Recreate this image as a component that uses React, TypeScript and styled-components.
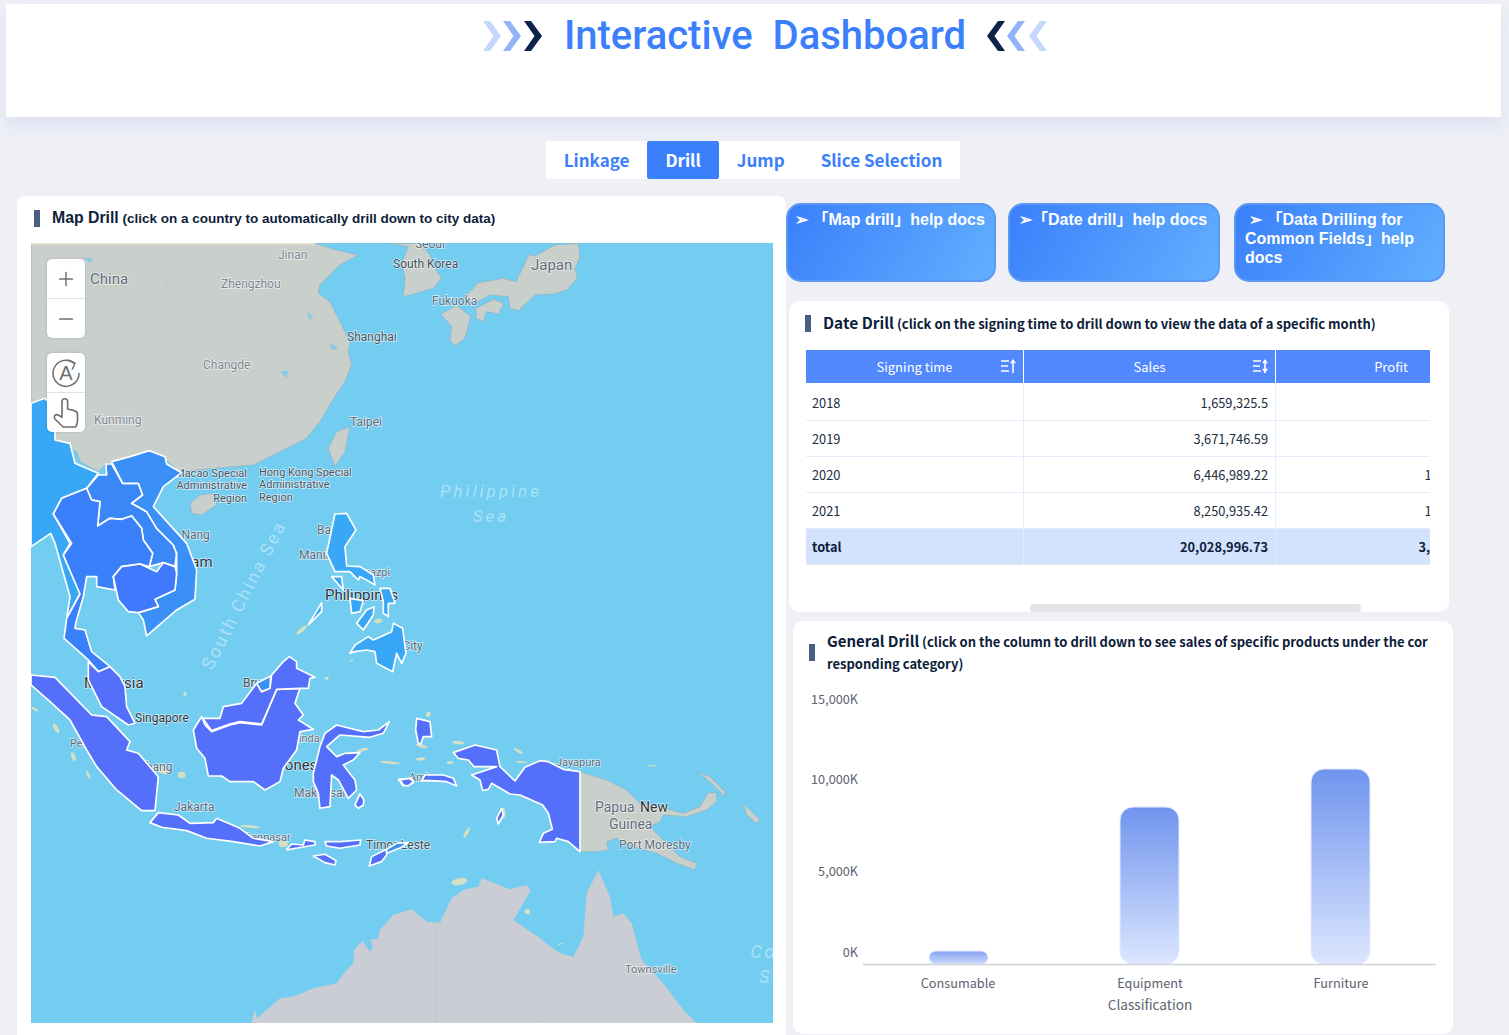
import React from 'react';
import styled, { createGlobalStyle } from 'styled-components';
import { Plus, Minus } from 'lucide-react';

const UI_FONT = '"Noto Sans CJK SC", "Noto Sans", sans-serif';
const ARIAL = '"Liberation Sans", "Noto Sans CJK SC", sans-serif';

const GlobalStyle = createGlobalStyle`
  html, body {
    margin: 0;
    padding: 0;
    background: #eff0f6;
    font-family: ${UI_FONT};
  }
  #root {
    height: 1035px;
    overflow: hidden;
  }
`;

const Header = styled.header`
  height: 113px;
  margin: 4px 8px 0 6px;
  padding: 14px 0 0 23px;
  background: #fff;
  box-shadow: 0 9px 16px rgba(195, 204, 235, 0.42);
  display: flex;
  justify-content: center;
  align-items: flex-start;
  box-sizing: border-box;
  gap: 21px;
`;

const Title = styled.h1`
  margin: 0;
  font-family: Roboto, sans-serif;
  font-size: 40px;
  line-height: 36px;
  font-weight: 500;
  color: #3b7ffb;
  white-space: pre;
`;

const Chevrons = styled.svg`
  width: 60px;
  height: 32px;
  margin-top: 2px;
  flex: none;
`;

const TabRow = styled.nav`
  display: flex;
  justify-content: center;
  margin-top: 24px;
  padding-right: 3px;
`;

const TabList = styled.div`
  display: flex;
  background: #fff;
  border-radius: 2px;
`;

const Tab = styled.div<{ $active?: boolean }>`
  height: 38px;
  line-height: 38px;
  padding: 0 18px;
  font-size: 17px;
  font-weight: 700;
  border-radius: 2px;
  color: ${p => (p.$active ? '#fff' : '#3b7ffb')};
  background: ${p => (p.$active ? '#3b7ffb' : 'transparent')};
`;

const Main = styled.main`
  display: flex;
  align-items: flex-start;
  margin-top: 17px;
  padding-left: 17px;
`;

const MapCard = styled.section`
  width: 769px;
  height: 840px;
  background: #fff;
  border-radius: 8px 8px 0 0;
  padding: 0 0 0 14px;
  box-sizing: border-box;
  flex: none;
`;

const CardTitle = styled.div<{ $arial?: boolean }>`
  display: flex;
  align-items: center;
  gap: 12px;
  font-family: ${p => (p.$arial ? ARIAL : UI_FONT)};
  color: #0d1d3a;
  font-weight: 700;
`;

const TitleBar = styled.i`
  display: block;
  flex: none;
  width: 6px;
  height: 17px;
  background: #4b5d84;
`;

const TitleText = styled.div<{ $size: number; $wrap?: boolean }>`
  font-size: ${p => p.$size}px;
  line-height: 22px;
  ${p => (p.$wrap ? 'word-break: break-all;' : 'white-space: nowrap;')}
`;

const TitleLead = styled.span<{ $size: number }>`
  font-size: ${p => p.$size}px;
`;

const MapHead = styled(CardTitle)`
  height: 47px;
  padding-left: 3px;
  padding-bottom: 3px;
  box-sizing: border-box;
`;

const MapFrame = styled.div`
  position: relative;
  width: 742px;
  height: 780px;
  overflow: hidden;
  background: #72cdf1;
`;

const MapSvg = styled.svg`
  display: block;
  width: 742px;
  height: 780px;
`;

const MapControls = styled.div`
  position: absolute;
  left: 16px;
  top: 16px;
  display: flex;
  flex-direction: column;
  gap: 15px;
`;

const ControlGroup = styled.div`
  width: 38px;
  background: #fff;
  border-radius: 5px;
  box-shadow: 0 0 3px rgba(0, 0, 0, 0.15);
  overflow: hidden;
`;

const ControlButton = styled.div`
  height: 39px;
  display: flex;
  align-items: center;
  justify-content: center;
  color: #6f6f6f;
  & + & {
    border-top: 1px solid #dfe1e3;
  }
`;

const RightColumn = styled.div`
  flex: none;
  width: 670px;
  padding-top: 7px;
`;

const DocRow = styled.div`
  display: flex;
`;

const DocButton = styled.div<{ $width: number; $gap: number; $indent: number }>`
  width: ${p => p.$width}px;
  height: 79px;
  margin-left: ${p => p.$gap}px;
  box-sizing: border-box;
  padding: 5px 0 0 9px;
  border: 2px solid #5b98f3;
  border-radius: 15px;
  background: linear-gradient(120deg, #3a7ffb 0%, #62b0ff 100%);
  color: #fff;
  font-family: ${ARIAL};
  font-weight: 700;
  font-size: 16px;
  line-height: 19px;
  text-indent: ${p => p.$indent}px;
`;

const Card = styled.section<{ $top: number; $left: number; $height: number }>`
  position: relative;
  width: 660px;
  height: ${p => p.$height}px;
  margin-top: ${p => p.$top}px;
  margin-left: ${p => p.$left}px;
  background: #fff;
  border-radius: 10px;
  box-sizing: border-box;
`;

const DateHead = styled(CardTitle)`
  padding: 10px 0 0 16px;
`;

const GeneralHead = styled(CardTitle)`
  padding: 9px 20px 0 16px;
`;

const TableWrap = styled.div`
  width: 624px;
  margin: 15px 0 0 17px;
  overflow: hidden;
`;

const Table = styled.table`
  width: 701px;
  table-layout: fixed;
  border-collapse: separate;
  border-spacing: 0;
  font-size: 12.8px;
  color: #222c40;
`;

const Th = styled.th`
  position: relative;
  height: 35px;
  padding: 0;
  font-weight: 400;
  font-size: 13px;
  color: #fff;
  background: #5288fe;
  border-right: 1px solid #fff;
  border-bottom: 2px solid #fff;
  box-sizing: border-box;
`;

const Td = styled.td<{ $num?: boolean; $total?: boolean }>`
  height: 36px;
  padding: ${p => (p.$num ? '0 7px 0 0' : '0 0 0 6px')};
  box-sizing: border-box;
  text-align: ${p => (p.$num ? 'right' : 'left')};
  font-weight: ${p => (p.$total ? 700 : 400)};
  color: ${p => (p.$total ? '#0d1d3a' : '#222c40')};
  background: ${p => (p.$total ? '#d3e2fd' : '#fff')};
  border-right: 1px solid #e3ecfb;
  border-bottom: 1px solid #e3ecfb;
`;

const SortGlyph = styled.svg`
  position: absolute;
  right: 6px;
  top: 8px;
  width: 17px;
  height: 16px;
`;

const ScrollThumb = styled.div`
  position: absolute;
  left: 241px;
  bottom: 0;
  width: 331px;
  height: 8px;
  border-radius: 4px;
  background: #e3e4e8;
`;

const ChartSvg = styled.svg`
  display: block;
  width: 660px;
  height: 345px;
  margin-top: 14px;
`;

const chevronPoints = (x: number, flip: boolean) => {
  const p = flip
    ? [[11, 0], [18, 0], [7.5, 15], [18, 30], [11, 30], [0, 15]]
    : [[0, 0], [7, 0], [18, 15], [7, 30], [0, 30], [10.5, 15]];
  return p.map(([a, b]) => `${a + x},${b + 1}`).join(' ');
};

const LeftChevrons = () => (
  <Chevrons viewBox="0 0 60 32">
    <polygon points={chevronPoints(0, false)} fill="#c6d7fe" />
    <polygon points={chevronPoints(20, false)} fill="#92b5fa" />
    <polygon points={chevronPoints(41, false)} fill="#0d2347" />
  </Chevrons>
);

const RightChevrons = () => (
  <Chevrons viewBox="0 0 60 32">
    <polygon points={chevronPoints(0, true)} fill="#0d2347" />
    <polygon points={chevronPoints(20, true)} fill="#92b5fa" />
    <polygon points={chevronPoints(42, true)} fill="#c6d7fe" />
  </Chevrons>
);

const SortIcon = ({ both }: { both?: boolean }) => (
  <SortGlyph viewBox="0 0 17 16" fill="none" stroke="#fff" strokeWidth="1.6">
    <path d="M1 3h8M1 8h7M1 13h8" />
    <path d="M13 15V2" />
    <path d="M10.5 5L13 1.5 15.5 5z" fill="#fff" strokeWidth="0.6" />
    {both && <path d="M10.5 11L13 14.5 15.5 11z" fill="#fff" strokeWidth="0.6" />}
  </SortGlyph>
);

const RotateA = () => (
  <svg width="30" height="30" viewBox="0 0 30 30" fill="none" stroke="#6f6f6f" strokeWidth="1.5">
    <path d="M23.5 5.5A13 13 0 1 0 28 15" />
    <path d="M17 2l7 3.2-2.8 6.3" />
    <text x="15" y="22" textAnchor="middle" fontFamily="Liberation Sans" fontSize="20" fill="#6f6f6f" stroke="none">A</text>
  </svg>
);

const HandPointer = () => (
  <svg width="28" height="32" viewBox="0 0 28 32" fill="none" stroke="#6f6f6f" strokeWidth="1.6" strokeLinejoin="round" strokeLinecap="round">
    <path d="M10 20V4.5a2.8 2.8 0 0 1 5.6 0V12l6.6 1.6c2 .5 3.3 2 3.3 4V24c0 2-.7 3.6-1.8 6H11L3 22c-1.6-1.7-.5-4.4 1.8-4.4 1.3 0 2.6.8 5.2 2.9" />
  </svg>
);

/* land, in the coordinates of the zoomed crops */
const LAND_A = [
  '33,145 885,145 950,165 1015,180 960,210 900,270 895,295 930,320 965,390 990,440 985,470 995,510 975,560 935,620 900,680 860,730 800,760 740,790 700,810 640,815 480,830 430,790 385,770 330,795 260,805 235,830 180,800 170,770 110,740 33,620',
  '510,925 540,900 580,895 590,930 545,960 515,955',
  '1105,148 1165,155 1145,205 1155,250 1150,305 1190,295 1240,280 1265,250 1245,220 1230,180 1200,145',
  '925,760 950,710 990,695 975,770 945,815',
];

const LAND_J = [
  '75,170 115,128 190,115 228,125 268,42 285,48 345,15 415,10 420,50 405,85 412,115 380,150 340,162 285,165 235,212 210,205 205,170 150,165 105,190',
  '108,205 160,178 192,190 175,222 140,215 130,245 108,235',
  '2,222 50,195 92,230 75,295 45,318 30,300 35,260',
];

const LAND_P = [
  '540,365 620,390 680,420 720,460 780,470 850,490 900,470 925,428 950,428 950,455 920,480 860,500 790,495 780,515 750,530 790,570 840,620 890,640 885,660 830,640 770,610 700,590 650,565 620,575 625,600 590,605 540,605',
  '890,365 930,380 975,425 975,440 930,395',
  '1030,460 1080,510 1070,520 1040,495',
];

const AUS_EAST = '420,866 480,910 520,920 550,860 560,730 595,660 630,740 640,800 670,790 695,820 725,930 790,1000 850,1080 890,1120 420,1120';
const AUS_WEST = '213,522 225,480 232,505 300,445 345,438 400,415 470,400 495,365 520,340 522,300 548,272 570,305 578,295 572,268 593,268 600,240 640,195 695,178 740,215 780,218 815,145 855,118 895,110 905,85 990,118 1040,105 1052,122 1000,210 1085,268 1085,522';

const BORDERS = [
  '440,290 480,310 520,330 545,310 570,300 610,325 640,340 670,325 700,320 745,295 790,300 825,330 860,350',
  '330,480 365,470 400,490 390,530 420,545 450,560 490,530 530,510 565,520 600,540 645,570 690,590 700,640 665,670 640,700 670,750 700,800',
  '530,510 535,565 540,620 580,640 620,660 610,710 600,760',
  '230,320 265,345 300,370 320,405 340,440 310,480 280,520 275,560 270,600 250,640 230,680 220,720',
  '380,200 410,235 440,260 430,290 455,315 480,340 460,370 440,400 470,425 500,450',
  '760,340 790,320 820,300 835,330 850,360 875,370 900,380 920,415 940,450',
  '690,590 735,575 780,560 805,545 830,530 855,525 880,520 920,540 960,560',
  '440,170 410,215 445,250 430,290',
  '560,160 590,210 600,265 570,300',
];

const ISLANDS = [
  [45, 808, 12, 4, 30], [108, 865, 6, 16, -30], [160, 950, 6, 14, -20], [205, 1005, 4, 14, -25],
  [485, 1005, 12, 10, 0], [430, 990, 18, 12, 20], [495, 762, 5, 8, 0], [920, 715, 7, 4, -20],
  [1075, 543, 12, 7, -10], [1110, 968, 30, 4, 5], [1200, 958, 14, 4, 0], [1028, 930, 18, 5, -15],
  [1225, 825, 8, 5, -30], [1205, 918, 18, 5, 15], [790, 1212, 14, 10, 0], [690, 1160, 30, 4, 5],
  [845, 570, 20, 6, -40], [995, 662, 5, 3, 0],
];

const ISLANDS_P = [
  [175, 278, 18, 5, 5], [355, 303, 16, 4, 30], [365, 336, 18, 3, 5], [150, 338, 10, 4, 0],
  [757, 347, 14, 2, 0], [178, 695, 24, 10, -10], [382, 785, 8, 8, 0], [200, 548, 5, 18, 30],
  [85, 190, 7, 5, -30], [310, 490, 6, 16, 0], [482, 882, 8, 2, -20], [65, 326, 10, 4, 0],
];

const TEXT_LABELS: { t: string; x: number; y: number; s: number; c: string; a?: 'start' | 'end' }[] = [
  { t: 'China', x: 90, y: 284, s: 15, c: '#5f6a7a' },
  { t: 'Jinan', x: 278, y: 259, s: 12, c: '#7c8491' },
  { t: 'Zhengzhou', x: 221, y: 288, s: 12, c: '#7c8491' },
  { t: 'Changde', x: 203, y: 369, s: 12, c: '#7c8491' },
  { t: 'Kunming', x: 94, y: 424, s: 12, c: '#7c8491' },
  { t: 'Seoul', x: 415, y: 248, s: 12, c: '#5f6a7a' },
  { t: 'South Korea', x: 393, y: 268, s: 12, c: '#434b58' },
  { t: 'Japan', x: 531, y: 270, s: 15, c: '#5f6a7a' },
  { t: 'Fukuoka', x: 432, y: 305, s: 12, c: '#6a7280' },
  { t: 'Shanghai', x: 347, y: 341, s: 12, c: '#4a525e' },
  { t: 'Taipei', x: 350, y: 426, s: 12, c: '#5f6a7a' },
  { t: 'Macao Special', x: 247, y: 477, s: 11, c: '#4a525e', a: 'end' },
  { t: 'Administrative', x: 247, y: 489, s: 11, c: '#4a525e', a: 'end' },
  { t: 'Region', x: 247, y: 502, s: 11, c: '#4a525e', a: 'end' },
  { t: 'Hong Kong Special', x: 259, y: 476, s: 11, c: '#4a525e' },
  { t: 'Administrative', x: 259, y: 488, s: 11, c: '#4a525e' },
  { t: 'Region', x: 259, y: 501, s: 11, c: '#4a525e' },
  { t: 'Da Nang', x: 164, y: 539, s: 12, c: '#5f6a7a' },
  { t: 'Vietnam', x: 157, y: 567, s: 15, c: '#2d333d' },
  { t: 'Baguio', x: 317, y: 534, s: 12, c: '#5f6a7a' },
  { t: 'Manila', x: 299, y: 559, s: 12, c: '#5f6a7a' },
  { t: 'Legazpi', x: 352, y: 576, s: 11, c: '#5f6a7a' },
  { t: 'Philippines', x: 325, y: 600, s: 15, c: '#2d333d' },
  { t: 'Davao City', x: 366, y: 650, s: 12, c: '#5f6a7a' },
  { t: 'Malaysia', x: 84, y: 688, s: 15, c: '#2d333d' },
  { t: 'Brunei', x: 243, y: 687, s: 12, c: '#434b58' },
  { t: 'Singapore', x: 135, y: 722, s: 12, c: '#2d333d' },
  { t: 'Pekanbaru', x: 70, y: 747, s: 11, c: '#5f6a7a' },
  { t: 'Palembang', x: 112, y: 771, s: 12, c: '#5f6a7a' },
  { t: 'Samarinda', x: 267, y: 742, s: 11, c: '#6a7280' },
  { t: 'Indonesia', x: 264, y: 770, s: 15, c: '#2d333d' },
  { t: 'Makassar', x: 294, y: 797, s: 12, c: '#5f6a7a' },
  { t: 'Jakarta', x: 174, y: 811, s: 12, c: '#5f6a7a' },
  { t: 'Denpasar', x: 244, y: 841, s: 11, c: '#5f6a7a' },
  { t: 'Timor-Leste', x: 366, y: 849, s: 12, c: '#434b58' },
  { t: 'Ambon', x: 409, y: 781, s: 11, c: '#5f6a7a' },
  { t: 'Jayapura', x: 556, y: 766, s: 11, c: '#5f6a7a' },
  { t: 'Papua', x: 595, y: 812, s: 14, c: '#5f6a7a' },
  { t: 'New', x: 640, y: 812, s: 14, c: '#2d333d' },
  { t: 'Guinea', x: 609, y: 829, s: 14, c: '#5f6a7a' },
  { t: 'Port Moresby', x: 619, y: 849, s: 12, c: '#5f6a7a' },
  { t: 'Townsville', x: 625, y: 973, s: 11, c: '#6a7280' },
];

const SEA_LABELS = [
  { t: 'Philippine', x: 491, y: 497, s: 17 },
  { t: 'Sea', x: 491, y: 522, s: 17 },
  { t: 'Coral', x: 778, y: 958, s: 18 },
  { t: 'Sea', x: 778, y: 983, s: 18 },
];

/* drill regions */
const REGIONS_A: [string, string][] = [
  ['#38a7f5', '33,-110 75,-125 105,-95 105,0 150,10 165,70 235,100 200,145 125,175 100,222 150,310 130,345 180,460 140,535 150,470 105,310 92,280 33,320'],
  ['#3a88f8', '258,72 260,105 235,105 200,145 215,180 240,185 233,258 270,235 305,238 335,228 365,265 370,300 398,340 388,380 430,368 465,380 470,340 460,315 410,265 380,215 335,190 368,165 355,130 308,130 275,72'],
  ['#3a90f7', '275,65 330,50 388,32 435,50 440,72 485,98 430,140 400,200 500,310 530,390 525,478 470,510 380,588 370,540 355,518 415,500 405,478 465,450 470,400 470,340 460,315 410,265 380,215 335,190 368,165 355,130 308,130'],
  ['#3a80fa', '200,145 125,175 100,222 155,310 130,345 180,462 140,535 132,595 205,660 235,695 270,680 240,655 215,635 195,570 165,565 167,550 190,470 200,410 230,410 230,440 285,450 280,410 305,380 360,372 388,380 398,340 370,300 365,265 335,228 305,238 270,235 233,258 240,185 215,180'],
  ['#4079fb', '305,380 360,372 410,395 430,368 465,380 470,400 465,450 405,478 415,500 355,518 325,515 295,480 280,410'],
  ['#5470fb', '205,665 235,695 270,680 300,710 315,740 320,800 345,850 325,855 245,800 205,720'],
  ['#5470fb', '33,705 105,712 215,825 260,830 330,905 320,930 355,940 415,1010 405,1112 365,1112 290,1050 230,980 200,930 150,840 90,785 33,735'],
  ['#5470fb', '390,1148 415,1118 475,1125 510,1150 580,1148 590,1135 660,1165 700,1195 760,1205 720,1218 640,1205 560,1195 500,1172 425,1162'],
  ['#5470fb', '800,1228 815,1212 850,1215 855,1200 885,1205 885,1215 810,1228'],
  ['#5470fb', '915,1205 960,1205 1022,1200 1020,1215 960,1225 920,1218'],
  ['#5470fb', '880,1248 915,1243 948,1262 945,1275 915,1268'],
  ['#5470fb', '1048,1278 1055,1250 1100,1228 1100,1245 1085,1265'],
  ['#3a8ff7', '1100,1228 1130,1210 1165,1208 1145,1222 1100,1240'],
  ['#5470fb', '520,870 545,830 555,855 575,875 630,855 660,848 725,855 770,748 840,745 825,790 850,825 835,840 880,868 840,875 830,930 790,985 780,1025 735,1050 700,1025 630,1025 605,1008 565,1008 555,955 530,925'],
  ['#5470fb', '548,835 575,872 630,852 660,845 725,852 770,748 840,745 865,745 870,715 885,712 830,685 830,665 808,650 790,665 755,705 750,745 725,755 710,730 665,790 610,800 600,835'],
  ['#3a8ff7', '710,730 752,708 750,745 725,755'],
  ['#5470fb', '880,1000 890,960 900,920 915,880 950,855 1030,875 1075,870 1108,845 1090,880 1050,892 960,885 920,920 950,950 975,940 1020,938 1000,960 970,975 1005,1020 1010,1050 985,1075 955,1020 935,1005 930,1100 900,1105 895,1060 880,1025'],
  ['#5470fb', '1005,1095 1020,1062 1032,1080 1030,1095 1015,1105'],
  ['#5470fb', '1135,1018 1175,1015 1180,1030 1150,1038'],
  ['#38a7f5', '945,222 980,220 1008,270 975,320 980,378 1020,380 1060,405 1065,435 1040,420 1020,410 1015,420 990,395 945,395 920,340'],
  ['#38a7f5', '935,410 965,410 970,450'],
  ['#38a7f5', '865,555 905,488 905,515'],
  ['#38a7f5', '990,475 1030,482 1020,515 995,520'],
  ['#38a7f5', '1010,550 1040,510 1062,500 1060,525 1030,570'],
  ['#38a7f5', '1080,445 1110,445 1125,490 1105,490 1105,530 1090,520 1090,485'],
  ['#38a7f5', '990,640 1005,615 1045,590 1060,600 1115,575 1120,550 1148,565 1158,640 1145,670 1130,640 1118,695 1070,670 1065,635 1040,630 1005,635'],
];

const REGIONS_P = [
  '160,308 225,285 290,300 300,350 345,393 375,352 420,332 445,335 490,358 540,365 540,605 505,575 470,565 465,575 418,577 430,550 457,538 445,490 428,465 360,435 330,432 275,400 265,418 248,422 240,390 215,375 290,350 222,350 205,330 175,325',
  '290,505 305,475 310,495 295,522',
  '50,205 90,215 95,260 70,260 62,282 55,280 47,240',
  '65,392 75,375 130,375 160,385 170,408 140,395 90,392',
  '0,390 30,385 40,395 25,408 10,405',
];

const ASIA_TX = 'translate(20 195) scale(0.3333)';
const SEA_TX = 'translate(20 440) scale(0.3333)';
const PAPUA_TX = 'translate(400 650) scale(0.3333)';
const JAPAN_TX = 'translate(440 240) scale(0.3333)';
const AUS_TX = 'translate(180 850) scale(0.3333)';

const MapDrawing = () => (
  <MapSvg viewBox="31 243 742 780">
    <defs>
      <linearGradient id="landFill" gradientUnits="userSpaceOnUse" x1="0" y1="900" x2="0" y2="1023">
        <stop offset="0" stopColor="#c9cfca" />
        <stop offset="1" stopColor="#cacdd8" />
      </linearGradient>
    </defs>
    <rect x="31" y="243" width="742" height="780" fill="#72cdf1" />
    <g fill="#c9cfca" stroke="#8fb6c6" strokeWidth="2.4">
      <g transform={ASIA_TX}>
        {LAND_A.map(p => <polygon key={p} points={p} />)}
      </g>
      <g transform={JAPAN_TX}>
        {LAND_J.map(p => <polygon key={p} points={p} />)}
      </g>
      <g transform={PAPUA_TX}>
        {LAND_P.map(p => <polygon key={p} points={p} />)}
      </g>
    </g>
    <g stroke="none" fill="#cacdd3">
      <polygon transform={AUS_TX} points={AUS_WEST} />
      <polygon transform={PAPUA_TX} points={AUS_EAST} />
    </g>
    <rect x="31" y="243" width="284" height="1.5" fill="#e8e8c6" />
    <g stroke="#bdc4cf" strokeWidth="2" fill="none">
      <path transform={AUS_TX} d="M770 220V520" />
      <path transform={PAPUA_TX} d="M432 885V1118" />
    </g>
    <g transform={ASIA_TX} fill="none" stroke="#bec6cf" strokeWidth="2" strokeOpacity="0.8">
      {BORDERS.map(p => <polyline key={p} points={p} />)}
      <path d="M190 185l20 20 10-12zM780 530l20 20 5-24zM860 350l20 15-10 10zM930 445l25 15-20 5z" fill="#86c9e6" stroke="none" />
    </g>
    <g fill="#e6e2b8" fillOpacity="0.85">
      <g transform={SEA_TX}>
        {ISLANDS.map(([x, y, rx, ry, r]) => (
          <ellipse key={`${x}-${y}`} cx={x} cy={y} rx={rx} ry={ry} transform={`rotate(${r} ${x} ${y})`} />
        ))}
      </g>
      <g transform={PAPUA_TX}>
        {ISLANDS_P.map(([x, y, rx, ry, r]) => (
          <ellipse key={`${x}-${y}`} cx={x} cy={y} rx={rx} ry={ry} transform={`rotate(${r} ${x} ${y})`} />
        ))}
      </g>
    </g>
    <g fontFamily="Roboto, sans-serif" fontStyle="italic" fill="rgba(255,255,255,0.42)">
      {SEA_LABELS.map(l => (
        <text key={`${l.t}${l.x}${l.y}`} x={l.x} y={l.y} fontSize={l.s} textAnchor="middle" letterSpacing="3">{l.t}</text>
      ))}
      <text transform="translate(212 671) rotate(-63)" fontSize="18" letterSpacing="2.2" fontStyle="normal">South China Sea</text>
    </g>
    <g fontFamily="Roboto, sans-serif" stroke="rgba(255,255,255,0.7)" strokeWidth="1.4" style={{ paintOrder: 'stroke' }}>
      {TEXT_LABELS.map(l => (
        <text key={`${l.t}${l.x}`} x={l.x} y={l.y} fontSize={l.s} fill={l.c} textAnchor={l.a ?? 'start'}>{l.t}</text>
      ))}
    </g>
    <g stroke="#fff" strokeWidth="5" strokeLinejoin="round">
      <g transform={SEA_TX}>
        {REGIONS_A.map(([c, p]) => <polygon key={p} points={p} fill={c} />)}
      </g>
      <g transform={PAPUA_TX} fill="#5470fb">
        {REGIONS_P.map(p => <polygon key={p} points={p} />)}
      </g>
    </g>
  </MapSvg>
);

const ROWS = [
  ['2018', '1,659,325.5', '246,118.37'],
  ['2019', '3,671,746.59', '602,114.83'],
  ['2020', '6,446,989.22', '1,043,287.45'],
  ['2021', '8,250,935.42', '1,235,002.18'],
];

const AXIS = [
  { t: '15,000K', y: 705 },
  { t: '10,000K', y: 785 },
  { t: '5,000K', y: 877 },
  { t: '0K', y: 958 },
];

const BARS = [
  { x: 929, y: 952, h: 13, r: 7, fill: 'url(#barSmall)' },
  { x: 1120, y: 808, h: 157, r: 13, fill: 'url(#barLarge)' },
  { x: 1311, y: 770, h: 195, r: 13, fill: 'url(#barLarge)' },
];

const ChartDrawing = () => (
  <ChartSvg viewBox="793 690 660 345">
    <defs>
      <linearGradient id="barLarge" x1="0" y1="0" x2="0" y2="1">
        <stop offset="0" stopColor="#7094ee" />
        <stop offset="1" stopColor="#dbe6fe" />
      </linearGradient>
      <linearGradient id="barSmall" x1="0" y1="0" x2="0" y2="1">
        <stop offset="0" stopColor="#87a4f3" />
        <stop offset="1" stopColor="#c9d7fb" />
      </linearGradient>
    </defs>
    <g fontFamily={UI_FONT} fontSize="12.7" fill="#5b6270">
      {AXIS.map(a => <text key={a.t} x="858" y={a.y} textAnchor="end">{a.t}</text>)}
      <text x="958" y="989" textAnchor="middle">Consumable</text>
      <text x="1150" y="989" textAnchor="middle">Equipment</text>
      <text x="1341" y="989" textAnchor="middle">Furniture</text>
      <text x="1150" y="1011" fontSize="13.6" textAnchor="middle">Classification</text>
    </g>
    {BARS.map(b => (
      <rect key={b.x} x={b.x} y={b.y} width="59" height={b.h} rx={b.r} fill={b.fill} stroke="#e4ebfd" strokeWidth="1" />
    ))}
    <line x1="863" y1="965.5" x2="1436" y2="965.5" stroke="#cfd1d6" strokeWidth="1.4" />
  </ChartSvg>
);

export default function App() {
  return (
    <>
      <GlobalStyle />
      <Header>
        <LeftChevrons />
        <Title>Interactive  Dashboard</Title>
        <RightChevrons />
      </Header>
      <TabRow>
        <TabList>
          <Tab>Linkage</Tab>
          <Tab $active>Drill</Tab>
          <Tab>Jump</Tab>
          <Tab>Slice Selection</Tab>
        </TabList>
      </TabRow>
      <Main>
        <MapCard>
          <MapHead $arial>
            <TitleBar />
            <TitleText $size={13.5}>
              <TitleLead $size={15.8}>Map Drill</TitleLead> (click on a country to automatically drill down to city data)
            </TitleText>
          </MapHead>
          <MapFrame>
            <MapDrawing />
            <MapControls>
              <ControlGroup>
                <ControlButton><Plus size={22} strokeWidth={1.6} /></ControlButton>
                <ControlButton><Minus size={22} strokeWidth={1.6} /></ControlButton>
              </ControlGroup>
              <ControlGroup>
                <ControlButton><RotateA /></ControlButton>
                <ControlButton><HandPointer /></ControlButton>
              </ControlGroup>
            </MapControls>
          </MapFrame>
        </MapCard>
        <RightColumn>
          <DocRow>
            <DocButton $width={210} $gap={0} $indent={-2}>➢ 「Map drill」help docs</DocButton>
            <DocButton $width={212} $gap={12} $indent={0}>➢「Date drill」help docs</DocButton>
            <DocButton $width={211} $gap={14} $indent={4}>➢ 「Data Drilling for Common Fields」help docs</DocButton>
          </DocRow>
          <Card $top={19} $left={3} $height={311}>
            <DateHead>
              <TitleBar />
              <TitleText $size={13}>
                <TitleLead $size={15.5}>Date Drill</TitleLead> (click on the signing time to drill down to view the data of a specific month)
              </TitleText>
            </DateHead>
            <TableWrap>
              <Table>
                <colgroup>
                  <col width="218" />
                  <col width="252" />
                  <col width="231" />
                </colgroup>
                <thead>
                  <tr>
                    <Th>Signing time<SortIcon /></Th>
                    <Th>Sales<SortIcon both /></Th>
                    <Th>Profit</Th>
                  </tr>
                </thead>
                <tbody>
                  {ROWS.map(r => (
                    <tr key={r[0]}>
                      <Td>{r[0]}</Td>
                      <Td $num>{r[1]}</Td>
                      <Td $num>{r[2]}</Td>
                    </tr>
                  ))}
                  <tr>
                    <Td $total>total</Td>
                    <Td $total $num>20,028,996.73</Td>
                    <Td $total $num>3,126,522.83</Td>
                  </tr>
                </tbody>
              </Table>
            </TableWrap>
            <ScrollThumb />
          </Card>
          <Card $top={9} $left={7} $height={413}>
            <GeneralHead>
              <TitleBar />
              <TitleText $size={13} $wrap>
                <TitleLead $size={15}>General Drill</TitleLead> (click on the column to drill down to see sales of specific products under the corresponding category)
              </TitleText>
            </GeneralHead>
            <ChartDrawing />
          </Card>
        </RightColumn>
      </Main>
    </>
  );
}
